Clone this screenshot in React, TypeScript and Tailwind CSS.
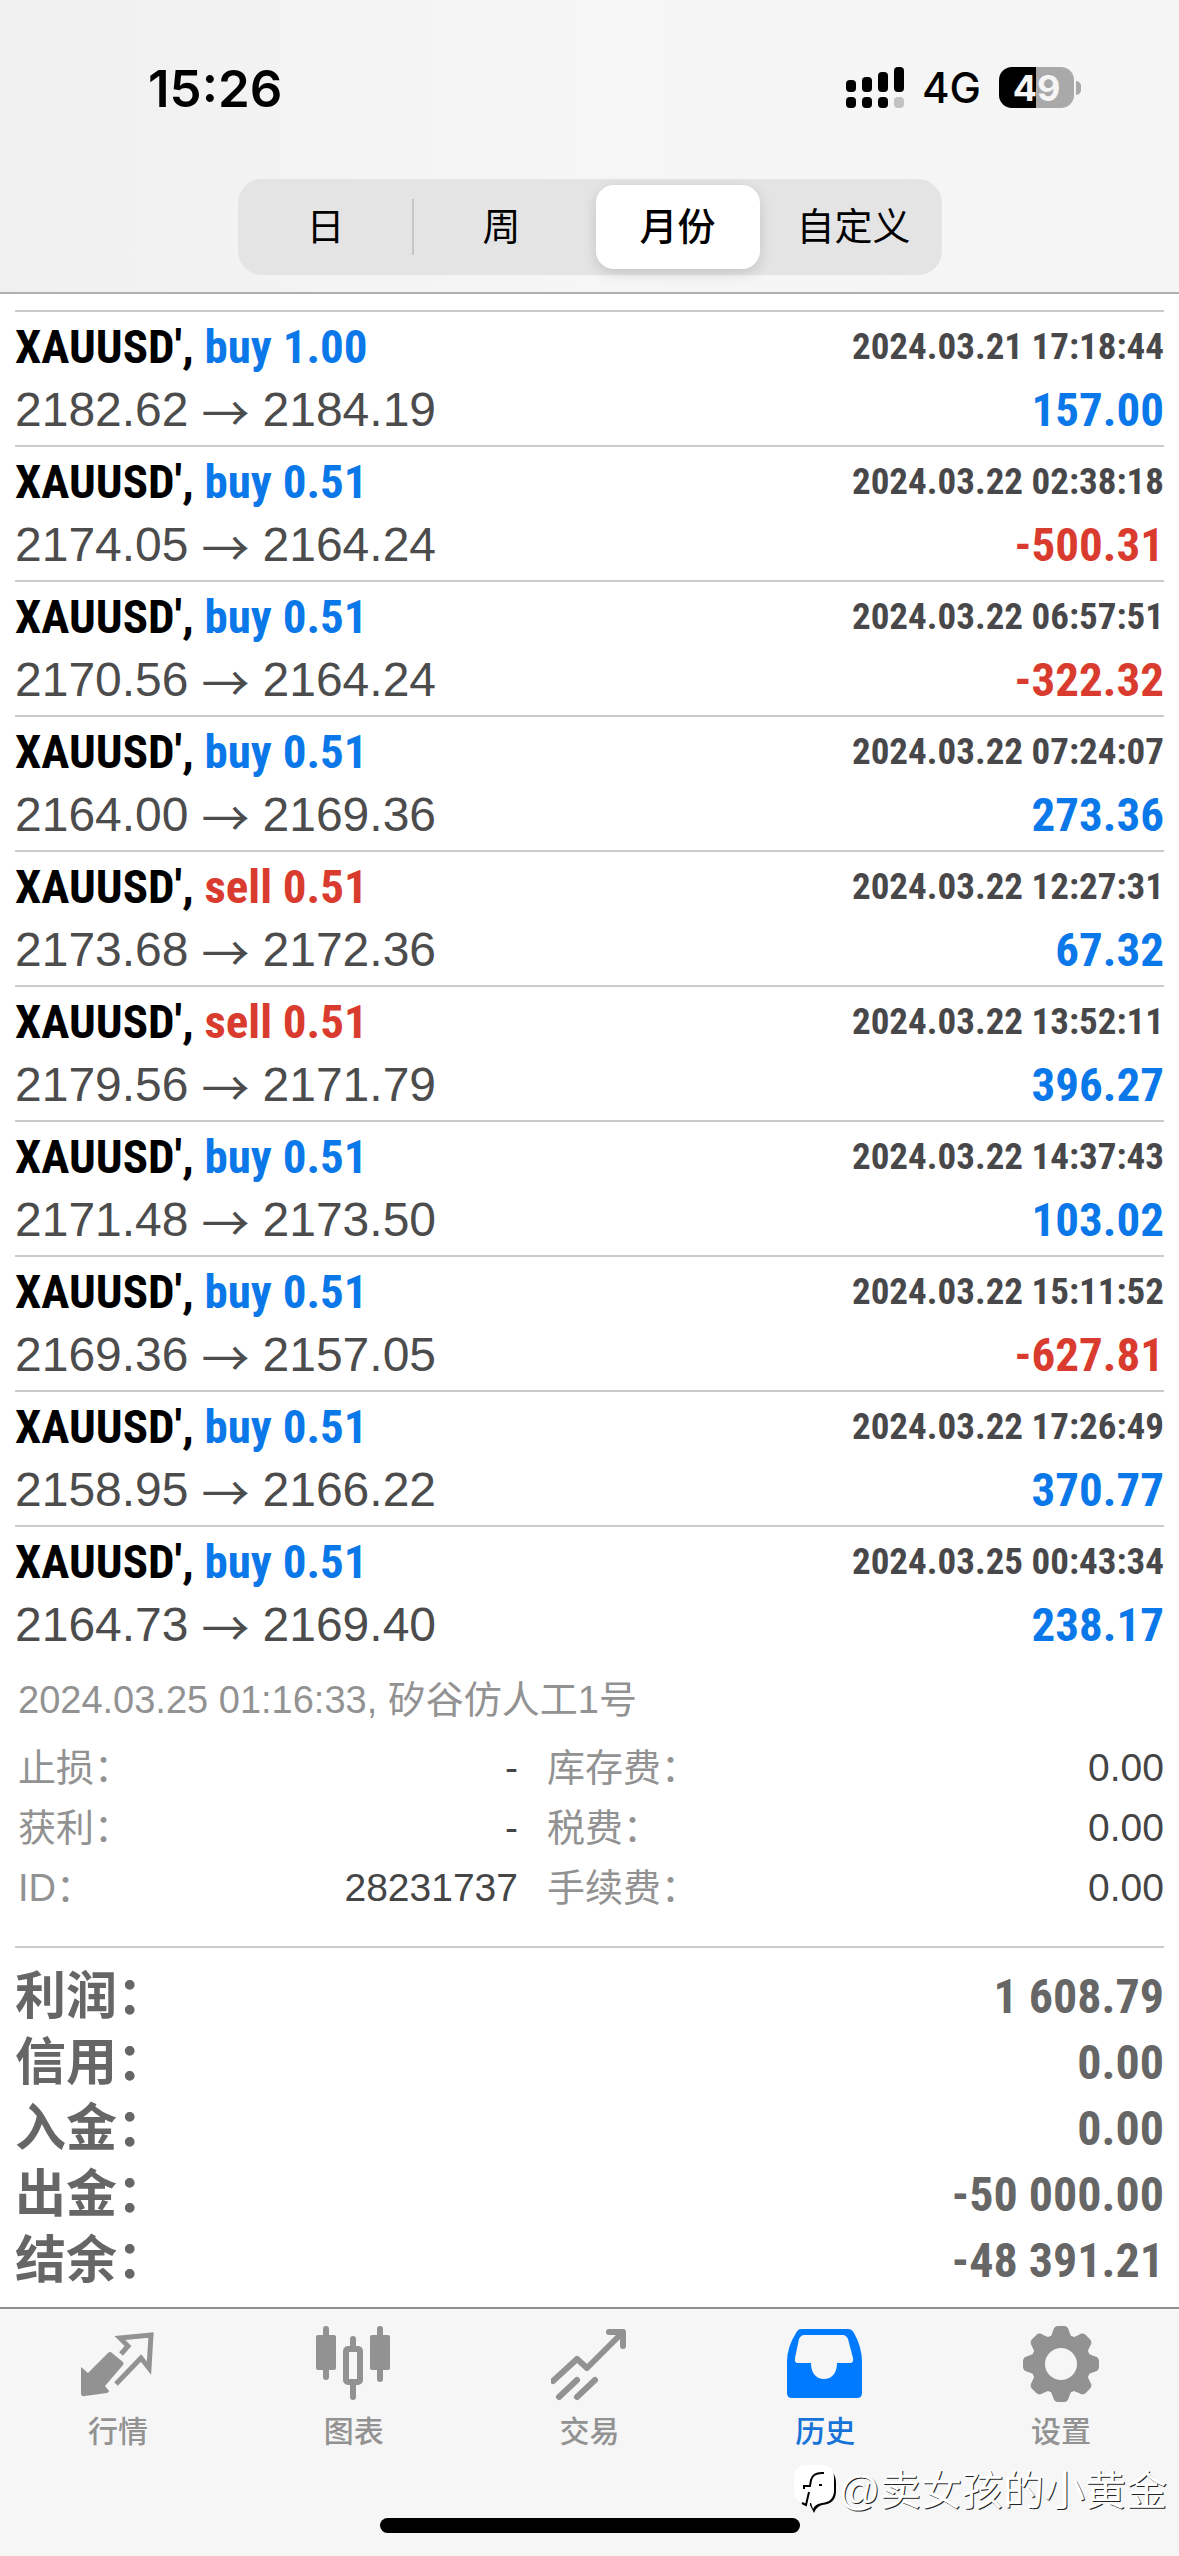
import { useState } from "react";

interface Deal {
  side: "buy" | "sell";
  volume: string;
  open: string;
  close: string;
  time: string;
  profit: string;
}

const DEALS: Deal[] = [
  { side: "buy", volume: "1.00", open: "2182.62", close: "2184.19", time: "2024.03.21 17:18:44", profit: "157.00" },
  { side: "buy", volume: "0.51", open: "2174.05", close: "2164.24", time: "2024.03.22 02:38:18", profit: "-500.31" },
  { side: "buy", volume: "0.51", open: "2170.56", close: "2164.24", time: "2024.03.22 06:57:51", profit: "-322.32" },
  { side: "buy", volume: "0.51", open: "2164.00", close: "2169.36", time: "2024.03.22 07:24:07", profit: "273.36" },
  { side: "sell", volume: "0.51", open: "2173.68", close: "2172.36", time: "2024.03.22 12:27:31", profit: "67.32" },
  { side: "sell", volume: "0.51", open: "2179.56", close: "2171.79", time: "2024.03.22 13:52:11", profit: "396.27" },
  { side: "buy", volume: "0.51", open: "2171.48", close: "2173.50", time: "2024.03.22 14:37:43", profit: "103.02" },
  { side: "buy", volume: "0.51", open: "2169.36", close: "2157.05", time: "2024.03.22 15:11:52", profit: "-627.81" },
  { side: "buy", volume: "0.51", open: "2158.95", close: "2166.22", time: "2024.03.22 17:26:49", profit: "370.77" },
  { side: "buy", volume: "0.51", open: "2164.73", close: "2169.40", time: "2024.03.25 00:43:34", profit: "238.17" },
];

const DETAILS = [
  ["止损：", "-", "库存费：", "0.00"],
  ["获利：", "-", "税费：", "0.00"],
  ["ID：", "28231737", "手续费：", "0.00"],
];

const SUMMARY = [
  ["利润：", "1 608.79"],
  ["信用：", "0.00"],
  ["入金：", "0.00"],
  ["出金：", "-50 000.00"],
  ["结余：", "-48 391.21"],
];

const PERIODS = ["日", "周", "月份", "自定义"];

// condensed face for symbols, times and amounts
const CONDENSED = "font-['Roboto_Condensed','Liberation_Sans',sans-serif] font-bold";

function StatusBar() {
  return (
    <div className="flex h-[108px] items-end justify-between pr-[98px] pl-[148px] font-['Inter','Liberation_Sans',sans-serif] text-black">
      <span className="text-[51px] leading-[39px] font-semibold">15:26</span>
      <div className="flex items-center">
        <svg width="58" height="41" viewBox="0 0 58 41" aria-label="signal">
          <rect x="0" y="13" width="10" height="12" rx="4" />
          <rect x="16" y="10" width="10" height="15" rx="4" />
          <rect x="32" y="5" width="10" height="20" rx="4" />
          <rect x="48" y="0" width="10" height="25" rx="4" />
          <rect x="0" y="30" width="10" height="11" rx="4" />
          <rect x="16" y="30" width="10" height="11" rx="4" />
          <rect x="32" y="30" width="10" height="11" rx="4" />
          <rect x="48" y="30" width="10" height="11" rx="4" fill="#c2c2c2" />
        </svg>
        <span className="ml-[18px] text-[42px] leading-[38px] font-medium">4G</span>
        <div className="ml-[18px] flex h-[41px] w-[75px] items-center justify-center rounded-[13px] bg-linear-to-r from-black from-50% to-[#aaa9aa] to-50% text-[36px] leading-[40px] font-bold text-[#f5f5f5]">
          49
        </div>
        <span className="ml-[2px] h-[14px] w-[5px] rounded-r-full bg-[#aaa9aa]" />
      </div>
    </div>
  );
}

function PeriodSwitch() {
  const [active, setActive] = useState(2);
  return (
    <div className="mx-auto mt-[71px] grid h-24 w-3/5 max-w-[704px] grid-cols-4 rounded-[24px] bg-[#e4e4e5]">
      {PERIODS.map((label, i) => (
        <div key={label} className="relative flex p-[6px]">
          <button
            type="button"
            onClick={() => setActive(i)}
            className={`flex-1 rounded-[18px] text-[38px] whitespace-nowrap text-black ${
              active === i ? "bg-white font-medium shadow-[0_4px_14px_rgba(0,0,0,0.14)]" : ""
            }`}
          >
            {label}
          </button>
          {i === 0 && <span className="absolute top-[20px] right-0 h-14 w-[2px] bg-[#c6c6c9]" />}
        </div>
      ))}
    </div>
  );
}

function DealRow({ deal }: { deal: Deal }) {
  const sideColor = deal.side === "buy" ? "text-[#0b78ea]" : "text-[#d93c2e]";
  const profitColor = deal.profit.startsWith("-") ? "text-[#d93c2e]" : "text-[#0b78ea]";
  return (
    <li className="h-[135px] border-t-2 border-[#cbcbcd] pt-[5px]">
      <div className="flex items-center justify-between leading-[60px]">
        <span className={`text-[47px] text-black ${CONDENSED}`}>
          XAUUSD&apos;, <span className={sideColor}>{deal.side} {deal.volume}</span>
        </span>
        <time className={`text-[37px] text-[#48484a] ${CONDENSED}`}>{deal.time}</time>
      </div>
      <div className="flex items-center justify-between leading-[66px]">
        <span className="flex text-[48px] text-[#4c4c4d]">
          {deal.open}
          <span className="mx-[13px] font-['Noto_Sans_CJK_SC',sans-serif]">→</span>
          {deal.close}
        </span>
        <span className={`text-[47px] ${CONDENSED} ${profitColor}`}>{deal.profit}</span>
      </div>
    </li>
  );
}

function QuotesIcon() {
  return (
    <svg width="76" height="76" viewBox="0 0 76 76" fill="none">
      <path d="M1 41 L8 47 L28 27 Q30 25 32 27 L43 36 Q44 38 43 39 L25 60 L29 65 Q29 66 27 67 L5 70 Q1 71 1 67 Z" fill="#929292" />
      <path d="M41 28 L48 20 L40 12 L71 9 L69 42 L61 32 L36 58" stroke="#929292" strokeWidth="5" />
    </svg>
  );
}

function ChartIcon() {
  return (
    <svg width="76" height="76" viewBox="0 0 76 76" fill="#929292">
      <rect x="7" y="0" width="6" height="54" rx="3" />
      <rect x="0" y="9" width="20" height="35" rx="2" />
      <rect x="61" y="0" width="6" height="56" rx="3" />
      <rect x="54" y="9" width="20" height="35" rx="2" />
      <rect x="34" y="10" width="6" height="14" rx="3" />
      <rect x="34" y="56" width="6" height="18" rx="3" />
      <rect x="30" y="23" width="14" height="33" rx="2" fill="none" stroke="#929292" strokeWidth="6" />
    </svg>
  );
}

function TradeIcon() {
  return (
    <svg width="76" height="76" viewBox="0 0 76 76" fill="none" stroke="#929292" strokeWidth="6" strokeLinecap="round" strokeLinejoin="round">
      <path d="M2 55 L26 33 L36 42 L71 7" />
      <path d="M58 6 H72 V20" />
      <path d="M8 71 L26 54" />
      <path d="M26 71 L44 54" />
    </svg>
  );
}

function HistoryIcon() {
  return (
    <svg width="76" height="76" viewBox="0 0 76 76">
      <path
        fill="#007aff"
        fillRule="evenodd"
        d="M14 3 H61 Q65 3 67 7 Q75 21 75 36 V67 Q75 72 70 72 H5 Q0 72 0 67 V36 Q0 21 9 7 Q11 3 14 3 Z M17 9 Q14 9 12 13 L8 32 Q7 37 11 37 H24 C24 47 29 53 37 53 C45 53 50 47 50 37 H63 Q67 37 66 32 L61 13 Q59 9 56 9 Z"
      />
    </svg>
  );
}

function SettingsIcon() {
  return (
    <svg width="76" height="76" viewBox="0 0 76 76">
      <g fill="#929292">
        {[0, 45, 90, 135, 180, 225, 270, 315].map((a) => (
          <path key={a} d="M25 14 Q29 10 30 5 Q31 0 35 0 H41 Q45 0 46 5 Q47 10 51 14 Z" transform={`rotate(${a} 38 38)`} />
        ))}
        <path fillRule="evenodd" d="M38 8 A30 30 0 1 0 38 68 A30 30 0 1 0 38 8 Z M38 22 A16 16 0 1 1 38 54 A16 16 0 1 1 38 22 Z" />
      </g>
    </svg>
  );
}

const TABS = [
  { label: "行情", icon: <QuotesIcon /> },
  { label: "图表", icon: <ChartIcon /> },
  { label: "交易", icon: <TradeIcon /> },
  { label: "历史", icon: <HistoryIcon />, active: true },
  { label: "设置", icon: <SettingsIcon /> },
];

function Watermark() {
  return (
    <div className="absolute right-[12px] bottom-[40px] flex items-center">
      <svg width="44" height="52" viewBox="0 0 44 52">
        <path d="M16 4 H30 Q42 5 42 18 V26 Q42 39 28 40 Q22 42 20 48 L16 40 Z" fill="#000" />
        <path d="M13 0 H27 Q40 0 40 13 V25 Q40 37 28 38 Q21 39 19 44 L17 38 H12 Q0 38 0 25 V13 Q0 0 13 0 Z" fill="#fff" />
        <path d="M30 8 Q19 7 17 15 L16 21 H10 V24 M15 27 L12 40 L8 38" fill="none" stroke="#000" strokeWidth="2" />
        <path d="M25 20 h3" stroke="#000" strokeWidth="2" />
      </svg>
      <span className="text-[41px] leading-[52px] whitespace-nowrap text-white [text-shadow:1px_1px_0_#222]">@卖女孩的小黄金</span>
    </div>
  );
}

export default function App() {
  return (
    <div className="min-h-screen bg-white font-['Liberation_Sans','Noto_Sans_CJK_SC',sans-serif]">
      <header className="border-b-2 border-[#b0b0b3] bg-linear-to-r from-[#f0f0f0] via-[#f6f6f6] to-[#f6f5f6] pb-[17px]">
        <StatusBar />
        <PeriodSwitch />
      </header>

      <main>
        <ul className="mt-4 px-[15px]">
          {DEALS.map((deal) => (
            <DealRow key={deal.time} deal={deal} />
          ))}
        </ul>

        <section className="mx-[15px] mt-[10px] border-b-2 border-[#cbcbcd] pb-[28px] pl-[3px] text-[38px] leading-[60px] text-[#929292]">
          <p className="mb-[8px]">2024.03.25 01:16:33, 矽谷仿人工1号</p>
          {DETAILS.map(([leftLabel, leftValue, rightLabel, rightValue]) => (
            <div key={leftLabel} className="grid grid-cols-[500px_1fr] gap-[29px]">
              <div className="flex justify-between">
                <span>{leftLabel}</span>
                <span className="text-[39px] text-[#454546]">{leftValue}</span>
              </div>
              <div className="flex justify-between">
                <span>{rightLabel}</span>
                <span className="text-[39px] text-[#454546]">{rightValue}</span>
              </div>
            </div>
          ))}
        </section>

        <section className="px-[15px] pt-4 pb-[13px] leading-[66px] font-bold text-[#666]">
          {SUMMARY.map(([label, value]) => (
            <div key={label} className="flex justify-between">
              <span className="text-[51px]">{label}</span>
              <span className={`text-[48px] ${CONDENSED}`}>{value}</span>
            </div>
          ))}
        </section>
      </main>

      <footer className="relative border-t-2 border-[#8e8e90] bg-[#f6f6f6] pb-6">
        <nav className="grid grid-cols-5 pt-[17px]">
          {TABS.map((tab) => (
            <a
              key={tab.label}
              href="#"
              className={`flex flex-col items-center gap-[10px] text-[30px] leading-[40px] font-medium ${
                tab.active ? "text-[#1673d8]" : "text-[#929292]"
              }`}
            >
              {tab.icon}
              {tab.label}
            </a>
          ))}
        </nav>
        <div className="mx-auto mt-[66px] h-[15px] w-[420px] rounded-full bg-black" />
        <Watermark />
      </footer>
    </div>
  );
}
